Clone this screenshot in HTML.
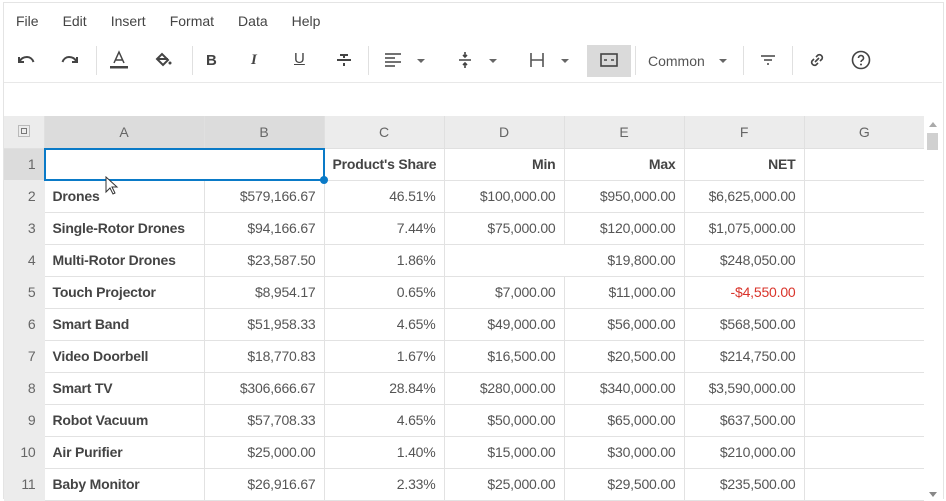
<!DOCTYPE html>
<html><head><style>
*{box-sizing:border-box;margin:0;padding:0}
body{width:946px;height:499px;overflow:hidden;background:#fff;font-family:"Liberation Sans",sans-serif;color:#444;position:relative}
.frame{position:absolute;left:3px;top:2px;width:941px;height:497px;border:1px solid #e4e4e4;border-bottom:none}
.menu{position:absolute;top:13px;left:16px;font-size:14px;color:#444}
.menu span{margin-right:24px}
.tb{position:absolute;top:40px;left:4px;width:938px;height:43px;border-bottom:1px solid #e8e8e8}
.ic{position:absolute;top:8px;width:24px;height:24px}
.sep{position:absolute;top:6px;width:1px;height:29px;background:#e0e0e0}
.caret{position:absolute;top:19px;width:0;height:0;border-left:4px solid transparent;border-right:4px solid transparent;border-top:4px solid #666}
table{position:absolute;left:4px;top:116px;width:920px;border-collapse:collapse;table-layout:fixed;font-size:14px;color:#555}
td{height:32px;border-right:1px solid #e2e2e2;border-bottom:1px solid #e2e2e2;padding:0 8px;white-space:nowrap;overflow:hidden;text-align:right;letter-spacing:-0.2px}
tr.h td{background:#ececec;text-align:center;color:#666;border-color:#e0e0e0}
td.rh{background:#ececec;text-align:right;padding:0 8px 0 0;color:#666;border-color:#ececec}
td.n{text-align:left;font-weight:bold;color:#444}
b{font-weight:bold;color:#444}
.sel{position:absolute;left:44px;top:148px;width:281px;height:33px;border:2px solid #0a7ac7}
.dot{position:absolute;left:320px;top:176px;width:8px;height:8px;border-radius:50%;background:#0a7ac7}
.sb{position:absolute;left:924px;top:116px;width:18px;height:383px;background:#fff}
</style></head><body>
<div class="frame"></div>
<div class="menu"><span>File</span><span>Edit</span><span>Insert</span><span>Format</span><span>Data</span><span>Help</span></div>
<div class="tb">
<svg class="ic" style="left:10px" viewBox="0 0 24 24"><path d="M5 9v5h5M5.5 13.5C7 10.5 10 9 13 9c3 0 5.5 2 6.5 5" fill="none" stroke="#444" stroke-width="2"/></svg>
<svg class="ic" style="left:54px" viewBox="0 0 24 24"><path d="M19 9v5h-5M18.5 13.5C17 10.5 14 9 11 9c-3 0-5.5 2-6.5 5" fill="none" stroke="#444" stroke-width="2"/></svg>
<div class="sep" style="left:92px"></div>
<svg class="ic" style="left:103px" viewBox="0 0 24 24"><path d="M7 15L12 4l5 11M8.5 12h7" fill="none" stroke="#444" stroke-width="1.5"/><rect x="3" y="18" width="18" height="2.5" fill="#444"/></svg>
<svg class="ic" style="left:147px" viewBox="0 0 24 24"><path d="M6 11l5-5 6 6-5 5z" fill="none" stroke="#444" stroke-width="2"/><path d="M6 11h11" stroke="#444" stroke-width="2"/><circle cx="19" cy="15" r="1.5" fill="#444"/></svg>
<div class="sep" style="left:188px"></div>
<div style="position:absolute;left:202px;top:12px;font-weight:bold;font-size:15px">B</div>
<div style="position:absolute;left:247px;top:12px;font-style:italic;font-weight:bold;font-size:15px;font-family:'Liberation Serif',serif">I</div>
<div style="position:absolute;left:290px;top:10px;font-size:15px;text-decoration:underline">U</div>
<svg class="ic" style="left:328px" viewBox="0 0 24 24"><path d="M5 12h14M8 7h8M12 7v3M12 15v3" stroke="#444" stroke-width="2"/></svg>
<div class="sep" style="left:364px"></div>
<svg class="ic" style="left:377px" viewBox="0 0 24 24"><path d="M4 6h16M4 10h10M4 14h16M4 18h10" stroke="#444" stroke-width="1.6"/></svg>
<div class="caret" style="left:413px"></div>
<svg class="ic" style="left:449px" viewBox="0 0 24 24"><path d="M6 12h12M12 4v5M10 7l2 2 2-2M12 20v-5M10 17l2-2 2 2" fill="none" stroke="#444" stroke-width="1.6"/></svg>
<div class="caret" style="left:485px"></div>
<svg class="ic" style="left:521px" viewBox="0 0 24 24"><path d="M6 5v14M6 12h12M18 5v14" stroke="#555" stroke-width="1.6"/></svg>
<div class="caret" style="left:557px"></div>
<div style="position:absolute;left:583px;top:5px;width:44px;height:32px;background:#dadada"></div>
<svg class="ic" style="left:593px" viewBox="0 0 24 24"><rect x="4" y="6" width="16" height="12" fill="none" stroke="#444" stroke-width="1.6"/><path d="M7 12h3M14 12h3" stroke="#444" stroke-width="1.6"/></svg>
<div class="sep" style="left:631px"></div>
<div style="position:absolute;left:644px;top:13px;font-size:14px;color:#555">Common</div>
<div class="caret" style="left:715px"></div>
<div class="sep" style="left:739px"></div>
<svg class="ic" style="left:752px" viewBox="0 0 24 24"><path d="M5 8h14M8 12h8M11 16h2" stroke="#444" stroke-width="1.6"/></svg>
<div class="sep" style="left:788px"></div>
<svg class="ic" style="left:801px" viewBox="0 0 24 24"><path d="M10 14l4-4M9 11l-2 2a3 3 0 0 0 4 4l2-2M15 13l2-2a3 3 0 0 0-4-4l-2 2" fill="none" stroke="#444" stroke-width="1.6"/></svg>
<svg class="ic" style="left:845px" viewBox="0 0 24 24"><circle cx="12" cy="12" r="8.5" fill="none" stroke="#444" stroke-width="1.6"/><path d="M9.5 10a2.5 2.5 0 1 1 3.5 2.3c-.7.4-1 .9-1 1.7" fill="none" stroke="#444" stroke-width="1.6"/><circle cx="12" cy="16.5" r="1" fill="#444"/></svg>
</div>
<table>
<colgroup><col style="width:40px"><col style="width:160px"><col style="width:120px"><col style="width:120px"><col style="width:120px"><col style="width:120px"><col style="width:120px"><col style="width:120px"></colgroup>
<tr class="h"><td style="padding:0"><svg width="12" height="12" viewBox="0 0 12 12"><rect x="0.5" y="0.5" width="11" height="11" fill="none" stroke="#888" stroke-dasharray="1 1"/><rect x="3.5" y="3.5" width="5" height="5" fill="none" stroke="#777"/></svg></td><td style="background:#dcdcdc">A</td><td style="background:#dcdcdc">B</td><td>C</td><td>D</td><td>E</td><td>F</td><td style="border-right:none">G</td></tr>
<tr><td class="rh" style="background:#dcdcdc">1</td><td colspan="2"></td><td><b>Product's Share</b></td><td><b>Min</b></td><td><b>Max</b></td><td><b>NET</b></td><td style="border-right:none"></td></tr>
<tr><td class="rh">2</td><td class="n">Drones</td><td>$579,166.67</td><td>46.51%</td><td>$100,000.00</td><td>$950,000.00</td><td>$6,625,000.00</td><td style="border-right:none"></td></tr>
<tr><td class="rh">3</td><td class="n">Single-Rotor Drones</td><td>$94,166.67</td><td>7.44%</td><td>$75,000.00</td><td>$120,000.00</td><td>$1,075,000.00</td><td style="border-right:none"></td></tr>
<tr><td class="rh">4</td><td class="n">Multi-Rotor Drones</td><td>$23,587.50</td><td>1.86%</td><td style="border-right:none"></td><td>$19,800.00</td><td>$248,050.00</td><td style="border-right:none"></td></tr>
<tr><td class="rh">5</td><td class="n">Touch Projector</td><td>$8,954.17</td><td>0.65%</td><td>$7,000.00</td><td>$11,000.00</td><td style="color:#d9342b">-$4,550.00</td><td style="border-right:none"></td></tr>
<tr><td class="rh">6</td><td class="n">Smart Band</td><td>$51,958.33</td><td>4.65%</td><td>$49,000.00</td><td>$56,000.00</td><td>$568,500.00</td><td style="border-right:none"></td></tr>
<tr><td class="rh">7</td><td class="n">Video Doorbell</td><td>$18,770.83</td><td>1.67%</td><td>$16,500.00</td><td>$20,500.00</td><td>$214,750.00</td><td style="border-right:none"></td></tr>
<tr><td class="rh">8</td><td class="n">Smart TV</td><td>$306,666.67</td><td>28.84%</td><td>$280,000.00</td><td>$340,000.00</td><td>$3,590,000.00</td><td style="border-right:none"></td></tr>
<tr><td class="rh">9</td><td class="n">Robot Vacuum</td><td>$57,708.33</td><td>4.65%</td><td>$50,000.00</td><td>$65,000.00</td><td>$637,500.00</td><td style="border-right:none"></td></tr>
<tr><td class="rh">10</td><td class="n">Air Purifier</td><td>$25,000.00</td><td>1.40%</td><td>$15,000.00</td><td>$30,000.00</td><td>$210,000.00</td><td style="border-right:none"></td></tr>
<tr><td class="rh">11</td><td class="n">Baby Monitor</td><td>$26,916.67</td><td>2.33%</td><td>$25,000.00</td><td>$29,500.00</td><td>$235,500.00</td><td style="border-right:none"></td></tr>
</table>
<div class="sel"></div><div class="dot"></div>
<div class="sb"><div style="position:absolute;left:5px;top:6px;border-left:4px solid transparent;border-right:4px solid transparent;border-bottom:5px solid #aaa"></div><div style="position:absolute;left:3px;top:17px;width:11px;height:17px;background:#d0d0d0"></div><div style="position:absolute;left:5px;top:376px;border-left:4px solid transparent;border-right:4px solid transparent;border-top:5px solid #888"></div></div>
<svg style="position:absolute;left:105px;top:176px" width="14" height="20" viewBox="0 0 14 20"><path d="M1 1v15l4-4 3 6 2-1-3-6h5z" fill="#fff" stroke="#333"/></svg>
</body></html>
